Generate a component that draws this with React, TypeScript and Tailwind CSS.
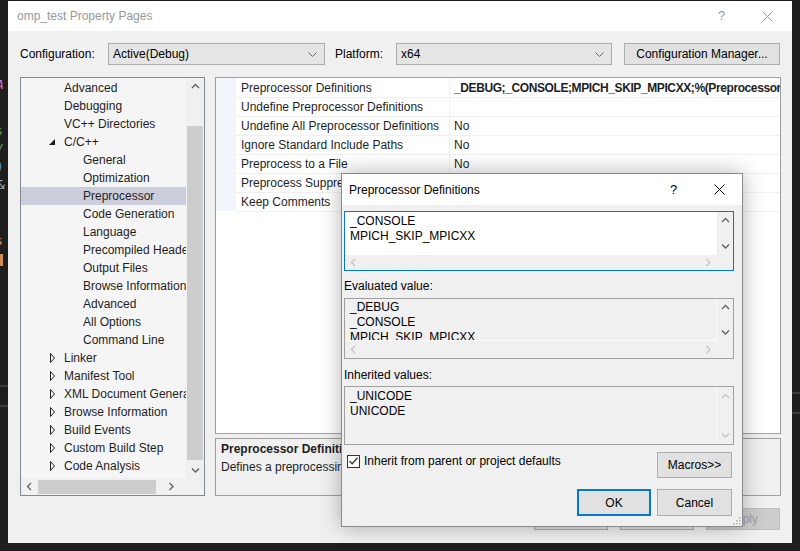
import React from 'react';

type Dir = 'up' | 'down' | 'left' | 'right';

const Arrow: React.FC<{ dir: Dir; color?: string }> = ({ dir, color = '#606060' }) => {
  const paths: Record<Dir, string> = {
    up: 'M1 5 L4.5 1.5 L8 5',
    down: 'M1 1.5 L4.5 5 L8 1.5',
    left: 'M5 1 L1.5 4.5 L5 8',
    right: 'M1.5 1 L5 4.5 L1.5 8',
  };
  const vertical = dir === 'up' || dir === 'down';
  return (
    <svg width={vertical ? 9 : 7} height={vertical ? 7 : 9} viewBox={vertical ? '0 0 9 7' : '0 0 7 9'}>
      <path d={paths[dir]} fill="none" stroke={color} strokeWidth="1.3" />
    </svg>
  );
};

const CloseIcon: React.FC<{ color: string }> = ({ color }) => (
  <svg width="11" height="11" viewBox="0 0 11 11">
    <path d="M0.5 0.5 L10.5 10.5 M10.5 0.5 L0.5 10.5" stroke={color} strokeWidth="1" />
  </svg>
);

const ComboArrow = () => (
  <svg width="9" height="5" viewBox="0 0 9 5">
    <path d="M0.5 0.5 L4.5 4.5 L8.5 0.5" fill="none" stroke="#606060" strokeWidth="1" />
  </svg>
);

type TreeItem = { label: string; level: 1 | 2; exp?: 'open' | 'closed'; selected?: boolean };

const treeItems: TreeItem[] = [
  { label: 'Advanced', level: 1 },
  { label: 'Debugging', level: 1 },
  { label: 'VC++ Directories', level: 1 },
  { label: 'C/C++', level: 1, exp: 'open' },
  { label: 'General', level: 2 },
  { label: 'Optimization', level: 2 },
  { label: 'Preprocessor', level: 2, selected: true },
  { label: 'Code Generation', level: 2 },
  { label: 'Language', level: 2 },
  { label: 'Precompiled Headers', level: 2 },
  { label: 'Output Files', level: 2 },
  { label: 'Browse Information', level: 2 },
  { label: 'Advanced', level: 2 },
  { label: 'All Options', level: 2 },
  { label: 'Command Line', level: 2 },
  { label: 'Linker', level: 1, exp: 'closed' },
  { label: 'Manifest Tool', level: 1, exp: 'closed' },
  { label: 'XML Document Generator', level: 1, exp: 'closed' },
  { label: 'Browse Information', level: 1, exp: 'closed' },
  { label: 'Build Events', level: 1, exp: 'closed' },
  { label: 'Custom Build Step', level: 1, exp: 'closed' },
  { label: 'Code Analysis', level: 1, exp: 'closed' },
];

const gridRows: { name: string; value: string; bold?: boolean }[] = [
  { name: 'Preprocessor Definitions', value: '_DEBUG;_CONSOLE;MPICH_SKIP_MPICXX;%(PreprocessorDefinitions)', bold: true },
  { name: 'Undefine Preprocessor Definitions', value: '' },
  { name: 'Undefine All Preprocessor Definitions', value: 'No' },
  { name: 'Ignore Standard Include Paths', value: 'No' },
  { name: 'Preprocess to a File', value: 'No' },
  { name: 'Preprocess Suppress Line Numbers', value: 'No' },
  { name: 'Keep Comments', value: 'No' },
];

const Tree = () => (
  <div className="w-[185px] h-[419px] border border-[#828790] bg-[#f5f5f5] flex flex-col">
    <div className="flex h-[400px]">
      <div className="w-[165px] pt-[1px] overflow-hidden text-[#1e1e1e]">
        {treeItems.map((item, i) => (
          <div
            key={i}
            className={`h-[18px] flex items-center whitespace-nowrap leading-[18px] ${item.selected ? 'bg-[#cccedb]' : ''}`}
          >
            {item.level === 1 ? (
              <>
                <div className="w-[28px] shrink-0" />
                <div className="w-[15px] shrink-0 flex items-center">
                  {item.exp === 'open' && (
                    <svg width="6" height="6" viewBox="0 0 6 6">
                      <path d="M6 0 L6 6 L0 6 Z" fill="#1e1e1e" />
                    </svg>
                  )}
                  {item.exp === 'closed' && (
                    <svg width="7" height="10" viewBox="0 0 7 10">
                      <path d="M1.5 0.5 L5.5 5 L1.5 9.5 Z" fill="none" stroke="#1e1e1e" strokeWidth="1" />
                    </svg>
                  )}
                </div>
              </>
            ) : (
              <div className="w-[62px] shrink-0" />
            )}
            <span>{item.label}</span>
          </div>
        ))}
      </div>
      <div className="w-[18px] bg-[#f0f0f0] flex flex-col">
        <div className="h-[17px] flex items-center justify-center">
          <Arrow dir="up" />
        </div>
        <div className="h-[31px]" />
        <div className="h-[334px] mx-[1px] bg-[#cdcdcd]" />
        <div className="flex-1 flex items-center justify-center pt-[2px]">
          <Arrow dir="down" />
        </div>
      </div>
    </div>
    <div className="flex flex-1">
      <div className="w-[165px] bg-[#f0f0f0] flex items-center">
        <div className="w-[17px] flex justify-center">
          <Arrow dir="left" />
        </div>
        <div className="w-[118px] h-[14px] bg-[#cdcdcd]" />
        <div className="flex-1 flex justify-center pl-[1px]">
          <Arrow dir="right" />
        </div>
      </div>
      <div className="flex-1 bg-[#f0f0f0]" />
    </div>
  </div>
);

const PropertyGrid = () => (
  <div className="h-[357px] border border-[#a0a0a0] bg-white flex overflow-hidden">
    <div className="w-[20px] shrink-0 flex flex-col">
      <div className="h-[133px] bg-[#f2f5fa]" />
    </div>
    <div className="flex-1 flex flex-col text-[#1e1e1e]">
      {gridRows.map((r, i) => (
        <div key={i} className={`h-[19px] flex whitespace-nowrap ${i > 0 ? 'border-t border-[#f0f0f0]' : ''}`}>
          <div className="w-[214px] shrink-0 pl-[5px] flex items-center overflow-hidden border-r border-[#f0f0f0]">
            {r.name}
          </div>
          <div className={`flex-1 pl-[4px] flex items-center overflow-hidden ${r.bold ? 'font-bold tracking-[-0.4px]' : ''}`}>
            {r.value}
          </div>
        </div>
      ))}
      <div className="border-t border-[#f0f0f0]" />
    </div>
  </div>
);

const Button: React.FC<{ label: string; className?: string }> = ({ label, className = '' }) => (
  <div className={`flex items-center justify-center bg-[#e1e1e1] border border-[#adadad] text-black ${className}`}>
    {label}
  </div>
);

const Dialog = () => (
  <div className="absolute left-[333px] top-[172px] w-[402px] h-[354px] border border-[#8a8a8a] bg-[#f0f0f0] flex flex-col shadow-[0_0_20px_rgba(0,0,0,0.3)] text-black">
    {/* Title bar */}
    <div className="h-[31px] bg-white flex items-center">
      <div className="flex-1 pl-[7px]">Preprocessor Definitions</div>
      <div className="w-[45px] flex justify-center text-[13px]">?</div>
      <div className="w-[46px] flex justify-center">
        <CloseIcon color="#000" />
      </div>
    </div>

    <div className="flex-1 pl-[2px] pr-[8px] pt-[6px] flex flex-col">
      {/* Editable box */}
      <div className="h-[60px] border border-[#0078d7] bg-white flex flex-col">
        <div className="flex h-[43px]">
          <div className="flex-1 pl-[5px] pt-[2px] leading-[15px]">
            <div>_CONSOLE</div>
            <div>MPICH_SKIP_MPICXX</div>
          </div>
          <div className="w-[16px] bg-[#f0f0f0] flex flex-col justify-between">
            <div className="h-[17px] flex items-center justify-center">
              <Arrow dir="up" />
            </div>
            <div className="h-[17px] flex items-center justify-center">
              <Arrow dir="down" />
            </div>
          </div>
        </div>
        <div className="flex flex-1">
          <div className="flex-1 bg-[#f0f0f0] flex items-center justify-between px-[5px]">
            <Arrow dir="left" color="#c4c4c4" />
            <Arrow dir="right" color="#c4c4c4" />
          </div>
          <div className="w-[16px] bg-[#f0f0f0]" />
        </div>
      </div>

      <div className="h-[27px] pt-[7px] leading-[16px]">Evaluated value:</div>

      {/* Evaluated box */}
      <div className="h-[61px] border border-[#a0a0a0] bg-[#f0f0f0] flex flex-col">
        <div className="flex h-[42px]">
          <div className="flex-1 pl-[5px] pt-[1px] leading-[15px] overflow-hidden border-r border-b border-[#fafafa]">
            <div>_DEBUG</div>
            <div>_CONSOLE</div>
            <div>MPICH_SKIP_MPICXX</div>
          </div>
          <div className="w-[16px] flex flex-col justify-between">
            <div className="h-[17px] flex items-center justify-center">
              <Arrow dir="up" />
            </div>
            <div className="h-[17px] flex items-center justify-center">
              <Arrow dir="down" />
            </div>
          </div>
        </div>
        <div className="flex flex-1">
          <div className="flex-1 flex items-center justify-between px-[5px]">
            <Arrow dir="left" color="#c4c4c4" />
            <Arrow dir="right" color="#c4c4c4" />
          </div>
          <div className="w-[16px]" />
        </div>
      </div>

      <div className="h-[27px] pt-[8px] leading-[16px]">Inherited values:</div>

      {/* Inherited box */}
      <div className="h-[59px] border border-[#a0a0a0] bg-[#f0f0f0] flex">
        <div className="flex-1 pl-[5px] pt-[2px] leading-[15px] border-r border-[#fafafa]">
          <div>_UNICODE</div>
          <div>UNICODE</div>
        </div>
        <div className="w-[16px] flex flex-col justify-between">
          <div className="h-[19px] flex items-center justify-center">
            <Arrow dir="up" color="#c4c4c4" />
          </div>
          <div className="h-[17px] flex items-center justify-center">
            <Arrow dir="down" color="#c4c4c4" />
          </div>
        </div>
      </div>

      {/* Checkbox + macros */}
      <div className="mt-[7px] h-[26px] flex justify-between">
        <div className="flex items-center h-[16px] mt-[1px] pl-[3px] gap-[4px]">
          <div className="w-[13px] h-[13px] border border-[#333] bg-white flex items-center justify-center">
            <svg width="9" height="8" viewBox="0 0 9 8">
              <path d="M0.5 4 L3.2 6.8 L8.5 0.8" fill="none" stroke="#333" strokeWidth="1.3" />
            </svg>
          </div>
          <span>Inherit from parent or project defaults</span>
        </div>
        <Button label="Macros>>" className="w-[75px] h-[26px] mr-[2px]" />
      </div>

      {/* OK / Cancel */}
      <div className="mt-[11px] flex justify-end gap-[6px] mr-[2px]">
        <div className="w-[74px] h-[27px] flex items-center justify-center bg-[#e1e1e1] border-2 border-[#0078d7]">
          OK
        </div>
        <Button label="Cancel" className="w-[75px] h-[27px]" />
      </div>
    </div>

    {/* resize grip */}
    <svg className="absolute right-[1px] bottom-[1px]" width="10" height="10" viewBox="0 0 10 10">
      <g fill="#b0b0b0">
        <rect x="8" y="2" width="1.5" height="1.5" />
        <rect x="5" y="5" width="1.5" height="1.5" />
        <rect x="8" y="5" width="1.5" height="1.5" />
        <rect x="2" y="8" width="1.5" height="1.5" />
        <rect x="5" y="8" width="1.5" height="1.5" />
        <rect x="8" y="8" width="1.5" height="1.5" />
      </g>
    </svg>
  </div>
);

const LeftStrip = () => (
  <div className="w-[8px] h-full overflow-hidden flex flex-col text-[13px] leading-[18px] whitespace-nowrap font-['DejaVu_Sans_Mono',monospace]">
    <div className="h-[76px]" />
    <div className="h-[18px] -ml-[4px] italic text-[#c678dd]">A</div>
    <div className="h-[28px]" />
    <div className="h-[18px] -ml-[5px] text-[#6a9955]">s</div>
    <div className="h-[18px] -ml-[4px] text-[#6a9955]">/</div>
    <div className="h-[18px] -ml-[4px] text-[#569cd6]">)</div>
    <div className="h-[18px] -ml-[3px] text-[#9cb4d6]">&amp;</div>
    <div className="h-[38px]" />
    <div className="h-[18px] -ml-[5px] text-[#ce9178]">s</div>
    <div className="h-[4px]" />
    <div className="h-[12px] w-[3px] bg-[#d18b4a]" />
    <div className="h-[119px]" />
    <div className="h-[2px] bg-[#3c3c3c]" />
    <div className="h-[18px]" />
    <div className="h-[2px] bg-[#3c3c3c]" />
  </div>
);

const RightStrip = () => (
  <div className="w-[8px] h-full flex flex-col">
    <div className="h-[392px]" />
    <div className="h-[2px] bg-[#3c3c3c]" />
    <div className="h-[18px]" />
    <div className="h-[2px] bg-[#3c3c3c]" />
  </div>
);

export default function App() {
  return (
    <div className="w-[800px] h-[551px] bg-[#1e1e1e] flex overflow-hidden font-['Liberation_Sans',Arial,sans-serif] text-[12px]">
      <LeftStrip />
      <div className="w-[784px] h-[542px] mt-[1px] bg-[#f0f0f0] flex flex-col relative">
        {/* Title bar */}
        <div className="h-[30px] bg-white flex items-center text-[#999999] pr-[2px]">
          <div className="flex-1 pl-[9px]">omp_test Property Pages</div>
          <div className="w-[45px] flex justify-center text-[13px]">?</div>
          <div className="w-[46px] flex justify-center">
            <CloseIcon color="#999999" />
          </div>
        </div>

        {/* Configuration row */}
        <div className="mt-[12px] h-[22px] flex items-center pl-[12px] text-black">
          <div className="w-[88px]">Configuration:</div>
          <div className="w-[217px] h-[22px] bg-[#e5e5e5] border border-[#acacac] flex items-center justify-between pl-[4px] pr-[7px]">
            <span>Active(Debug)</span>
            <ComboArrow />
          </div>
          <div className="w-[71px] pl-[10px]">Platform:</div>
          <div className="w-[216px] h-[22px] bg-[#e5e5e5] border border-[#acacac] flex items-center justify-between pl-[4px] pr-[7px]">
            <span>x64</span>
            <ComboArrow />
          </div>
          <Button label="Configuration Manager..." className="ml-[12px] w-[156px] h-[22px]" />
        </div>

        {/* Main area */}
        <div className="mt-[12px] flex pl-[12px]">
          <Tree />
          <div className="ml-[10px] w-[566px] flex flex-col gap-[4px]">
            <PropertyGrid />
            <div className="h-[58px] border border-[#a0a0a0] bg-[#f0f0f0] pl-[5px] pt-[1px] leading-[18px] text-[#1e1e1e] whitespace-nowrap overflow-hidden">
              <div className="font-bold">Preprocessor Definitions</div>
              <div>Defines a preprocessing symbols for your source file. (/D[macro])</div>
            </div>
          </div>
        </div>

        {/* Bottom buttons */}
        <div className="mt-[12px] flex justify-end gap-[12px] pr-[12px]">
          <Button label="OK" className="w-[74px] h-[22px]" />
          <Button label="Cancel" className="w-[74px] h-[22px]" />
          <div className="w-[74px] h-[22px] flex items-center justify-center bg-[#cccccc] border border-[#bfbfbf] text-[#a0a0a0]">
            Apply
          </div>
        </div>

        <Dialog />
      </div>
      <RightStrip />
    </div>
  );
}
